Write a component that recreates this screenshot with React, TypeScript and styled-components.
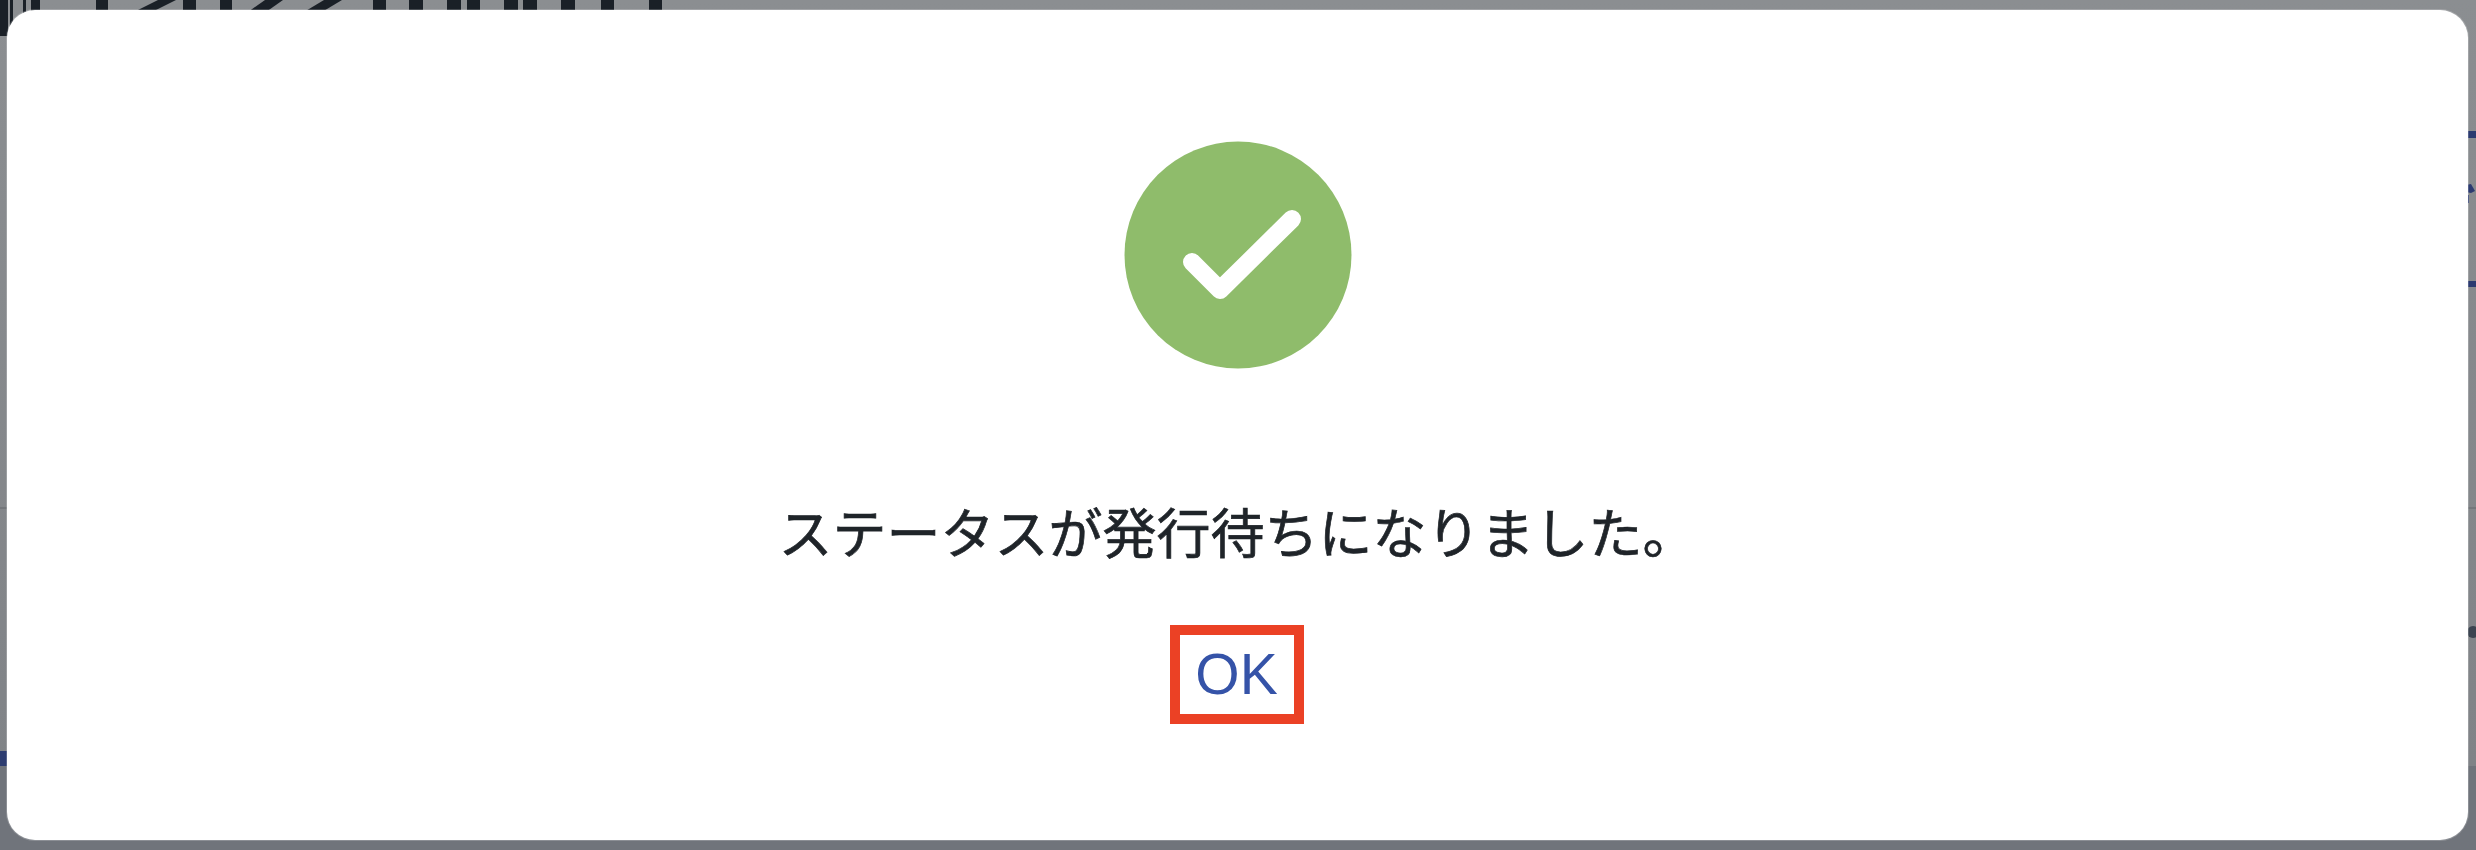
import styled, { createGlobalStyle } from "styled-components";

const GlobalStyle = createGlobalStyle`
  html, body {
    margin: 0;
    padding: 0;
  }
`;

// bits of the page behind the dialog that stay visible around its edge
const topStubs = [
  [96, 108], [183, 196], [220, 232], [373, 386], [409, 423], [447, 461], [467, 480],
  [504, 518], [523, 537], [561, 575], [601, 614], [649, 662],
];
const slashes = [
  [176, 158, 134, 152],
  [283, 265, 248, 266],
  [342, 324, 304, 322],
];
const leftBars = [[0, 8], [10, 13], [23, 26], [31, 40]];

export default function App() {
  return (
    <Backdrop>
      <GlobalStyle />
      <PageBehind viewBox="0 0 2476 850" aria-hidden="true">
        {leftBars.map(([a, b]) => (
          <rect key={a} x={a} y={0} width={b - a} height={36} fill="#1a2027" />
        ))}
        {topStubs.map(([a, b]) => (
          <rect key={a} x={a} y={0} width={b - a} height={12} fill="#1a2027" />
        ))}
        {slashes.map(([a, b, c, d]) => (
          <polygon key={a} points={`${a},0 ${b},0 ${c},12 ${d},12`} fill="#1a2027" />
        ))}
        <rect x={2466} y={131} width={10} height={7} fill="#2b3a70" />
        <rect x={2466} y={281} width={10} height={6} fill="#2b3a70" />
        <polygon points="2466,185 2471,184 2475,191 2471,193 2466,192" fill="#2b3a70" />
        <rect x={2466} y={195} width={3} height={8} fill="#2b3a70" />
        <rect x={0} y={751} width={10} height={15} fill="#2d3c70" />
        <rect x={0} y={507} width={10} height={2} fill="#74777b" />
        <rect x={2466} y={507} width={10} height={2} fill="#74777b" />
        <ellipse cx={2473} cy={632} rx={6} ry={6} fill="#3b4450" />
      </PageBehind>
      <Dialog role="dialog">
        <SuccessIcon viewBox="0 0 228 228">
          <circle cx="114" cy="114" r="113.5" fill="#8fbc6b" />
          <polyline
            points="68,121 96,149 168,78"
            fill="none"
            stroke="#fff"
            strokeWidth="18"
            strokeLinecap="round"
            strokeLinejoin="round"
          />
        </SuccessIcon>
        <Message>ステータスが発行待ちになりました。</Message>
        <OkButton>OK</OkButton>
      </Dialog>
    </Backdrop>
  );
}

const Backdrop = styled.div`
  position: relative;
  box-sizing: border-box;
  width: 2476px;
  height: 850px;
  padding: 10px 8px 10px 7px;
  overflow: hidden;
  background: linear-gradient(
    to bottom,
    #8b8e91 0,
    #808387 766px,
    #70747b 766px,
    #70747b 100%
  );
`;

const PageBehind = styled.svg`
  position: absolute;
  top: 0;
  left: 0;
  width: 2476px;
  height: 850px;
`;

const Dialog = styled.div`
  position: relative;
  box-sizing: border-box;
  height: 830px;
  padding-top: 131px;
  display: flex;
  flex-direction: column;
  align-items: center;
  background: #fff;
  border-radius: 28px;
  box-shadow: 0 0 0 1px rgba(255, 255, 255, 0.2);
`;

const SuccessIcon = styled.svg`
  width: 228px;
  height: 228px;
  flex: none;
`;

const Message = styled.div`
  margin-top: 132px;
  font-family: "Noto Sans CJK JP", "Liberation Sans", sans-serif;
  font-size: 54px;
  font-weight: 400;
  -webkit-text-stroke: 0.7px #1f2429;
  line-height: 60px;
  color: #1f2429;
  white-space: nowrap;
`;

const OkButton = styled.button`
  box-sizing: border-box;
  width: 134px;
  height: 99px;
  margin-top: 64px;
  margin-right: 2px;
  padding: 0;
  background: #fff;
  border: 10px solid #eb4125;
  border-radius: 0;
  font-family: "Liberation Sans", Arial, sans-serif;
  font-size: 57px;
  line-height: 79px;
  color: #3553a8;
`;
